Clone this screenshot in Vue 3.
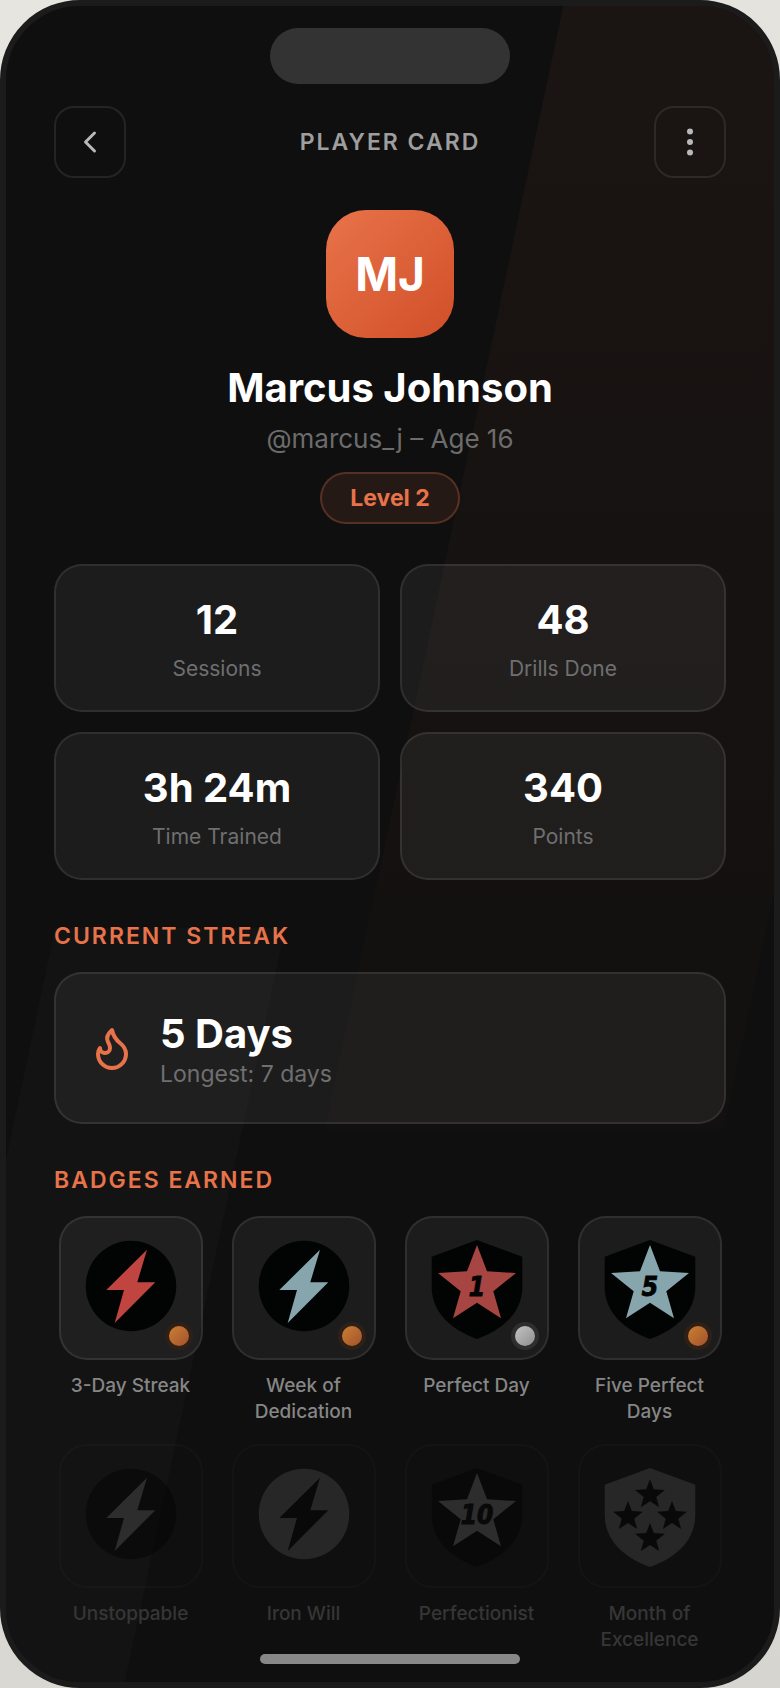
<template>
    <div class="phone">
        <div class="backdrop">
            <div class="stripe stripe--warm"></div>
            <div class="stripe stripe--light"></div>
        </div>

        <main class="screen">
            <div class="island"></div>

            <header class="topbar">
                <button type="button" class="topbar__btn" aria-label="Back">
                    <svg width="36" height="36" viewBox="0 0 24 24" fill="none" stroke="currentColor" stroke-width="2"
                        stroke-linecap="round" stroke-linejoin="round">
                        <path d="M15 18l-6-6 6-6" />
                    </svg>
                </button>
                <h1 class="topbar__title">PLAYER CARD</h1>
                <button type="button" class="topbar__btn" aria-label="More options">
                    <svg width="36" height="36" viewBox="0 0 24 24" fill="currentColor">
                        <circle cx="12" cy="5" r="2" />
                        <circle cx="12" cy="12" r="2" />
                        <circle cx="12" cy="19" r="2" />
                    </svg>
                </button>
            </header>

            <section class="profile">
                <div class="profile__avatar">{{ player.initials }}</div>
                <h2 class="profile__name">{{ player.name }}</h2>
                <p class="profile__handle">{{ player.handle }} – Age {{ player.age }}</p>
                <span class="profile__level">Level {{ player.level }}</span>
            </section>

            <section class="stats">
                <div v-for="stat in stats" :key="stat.label" class="card stat">
                    <span class="big-text">{{ stat.value }}</span>
                    <span class="stat__label">{{ stat.label }}</span>
                </div>
            </section>

            <h3 class="section-title">CURRENT STREAK</h3>
            <section class="card streak">
                <svg class="streak__icon" width="48" height="48" viewBox="0 0 24 24" fill="none" stroke="currentColor"
                    stroke-width="2" stroke-linecap="round" stroke-linejoin="round">
                    <path
                        d="M8.5 14.5A2.5 2.5 0 0 0 11 12c0-1.38-.5-2-1-3-1.072-2.143-.224-4.054 2-6 .5 2.5 2 4.9 4 6.5 2 1.6 3 3.5 3 5.5a7 7 0 1 1-14 0c0-1.153.433-2.294 1-3a2.5 2.5 0 0 0 2.5 2.5z" />
                </svg>
                <div class="streak__info">
                    <span class="big-text">5 Days</span>
                    <span class="streak__longest">Longest: 7 days</span>
                </div>
            </section>

            <h3 class="section-title">BADGES EARNED</h3>
            <ul class="badges">
                <li v-for="badge in badges" :key="badge.name" class="badge" :class="{ 'badge--locked': !badge.medal }">
                    <div class="badge__box">
                        <svg width="96" height="104" viewBox="0 0 96 104" :class="'tone-' + badge.tone">
                            <circle v-if="badge.shape === 'bolt'" class="base" cx="48" cy="50" r="45.3" />
                            <path v-else class="base" :d="shieldPath" />
                            <path v-if="badge.shape === 'bolt'" class="mark" :d="boltPath" />
                            <path v-if="badge.shape === 'star'" class="mark" :d="starPath" />
                            <template v-if="badge.shape === 'stars'">
                                <path v-for="(pos, i) in smallStars" :key="i" class="mark" :d="starPath"
                                    :transform="`translate(${pos[0]} ${pos[1]}) scale(.382) translate(-48 -9)`" />
                            </template>
                            <text v-if="badge.count" class="count" x="48" y="60" text-anchor="middle">{{ badge.count }}</text>
                        </svg>
                        <span v-if="badge.medal" class="medal" :class="'medal--' + badge.medal"></span>
                    </div>
                    <span class="badge__name">{{ badge.name }}</span>
                </li>
            </ul>
        </main>

        <div class="home-indicator"></div>
    </div>
</template>

<script setup>
import { ref } from 'vue'

const player = ref({
    initials: 'MJ',
    name: 'Marcus Johnson',
    handle: '@marcus_j',
    age: 16,
    level: 2
})

const stats = ref([
    { value: '12', label: 'Sessions' },
    { value: '48', label: 'Drills Done' },
    { value: '3h 24m', label: 'Time Trained' },
    { value: '340', label: 'Points' }
])

// badges without a medal are still locked
const badges = ref([
    { name: '3-Day Streak', shape: 'bolt', tone: 'red', medal: 'bronze' },
    { name: 'Week of Dedication', shape: 'bolt', tone: 'blue', medal: 'bronze' },
    { name: 'Perfect Day', shape: 'star', tone: 'brick', count: 1, medal: 'silver' },
    { name: 'Five Perfect Days', shape: 'star', tone: 'blue', count: 5, medal: 'bronze' },
    { name: 'Unstoppable', shape: 'bolt', tone: 'dim' },
    { name: 'Iron Will', shape: 'bolt', tone: 'dim-inverse' },
    { name: 'Perfectionist', shape: 'star', tone: 'dim', count: 10 },
    { name: 'Month of Excellence', shape: 'stars', tone: 'dim-inverse' }
])

const boltPath = 'M64 13.7L54.3 46.2H72.3L31.7 87L41 54H23.3Z'
const starPath = 'M48 9L58 35.3L87 37L64.3 55.3L72 82.3L48 66.7L24 82.3L31.7 55.3L9 37L38 35.3Z'
const shieldPath = 'M48 4L93.3 20.7V51C93.3 77 73 94 48 103C23 94 2.7 77 2.7 51V20.7Z'
const smallStars = [[48, 15.3], [26, 37], [70, 37], [48, 59]]
</script>

<style>
body {
    background: linear-gradient(160deg, #e6e5e0, #d6d5d0);
}
</style>

<style scoped>
.phone {
    position: relative;
    box-sizing: border-box;
    min-height: 100vh;
    border: 6px solid #1b1b1b;
    border-radius: 80px;
    background-color: #0f0f0f;
    overflow: hidden;
    font-family: Inter, "Open Sans", sans-serif;
    color: #fff;
}

.backdrop {
    position: absolute;
    inset: 0;
    overflow: hidden;
}

.stripe {
    position: absolute;
    transform: skewX(-12deg);
}

.stripe--warm {
    top: 0;
    right: -9%;
    width: 52%;
    height: 67%;
    background: linear-gradient(rgba(232, 115, 74, 0.055), rgba(232, 115, 74, 0.01));
}

.stripe--light {
    top: 55%;
    bottom: 0;
    left: -4%;
    width: 30%;
    background-color: rgba(255, 255, 255, 0.02);
}

.screen {
    position: relative;
    display: flex;
    flex-direction: column;
    padding: 22px 48px 24px;
}

.island {
    align-self: center;
    width: 240px;
    height: 56px;
    border-radius: 28px;
    background-color: #333;
}

.topbar {
    display: flex;
    align-items: center;
    justify-content: space-between;
    margin-top: 22px;
}

.topbar__btn {
    display: flex;
    align-items: center;
    justify-content: center;
    width: 72px;
    height: 72px;
    padding: 0;
    border: 2px solid rgba(255, 255, 255, 0.09);
    border-radius: 20px;
    background-color: transparent;
    color: #b8b8b8;
    cursor: pointer;
}

.topbar__title {
    margin: 0;
    font-size: 23px;
    line-height: 28px;
    font-weight: 600;
    letter-spacing: 2px;
    color: #9e9e9e;
}

.profile {
    display: flex;
    flex-direction: column;
    align-items: center;
    margin-top: 32px;
}

.profile__avatar {
    display: flex;
    align-items: center;
    justify-content: center;
    width: 128px;
    height: 128px;
    border-radius: 40px;
    background: linear-gradient(135deg, #e8734a, #d14f28);
    font-size: 46px;
    font-weight: 700;
}

.profile__name {
    margin: 26px 0 0;
    font-size: 40px;
    line-height: 48px;
    font-weight: 700;
}

.profile__handle {
    margin: 12px 0 0;
    font-size: 26px;
    line-height: 30px;
    color: #6c6c6c;
}

.profile__level {
    box-sizing: border-box;
    margin-top: 18px;
    padding: 0 28px;
    border: 2px solid rgba(232, 115, 74, 0.25);
    border-radius: 26px;
    background-color: rgba(232, 115, 74, 0.1);
    font-size: 23px;
    line-height: 48px;
    font-weight: 700;
    color: #e8734a;
}

.card {
    border: 2px solid rgba(255, 255, 255, 0.09);
    border-radius: 28px;
    background-color: rgba(255, 255, 255, 0.053);
}

.big-text {
    font-size: 40px;
    line-height: 48px;
    font-weight: 700;
}

.stats {
    display: grid;
    grid-template-columns: 1fr 1fr;
    gap: 20px;
    margin-top: 40px;
}

.stat {
    display: flex;
    flex-direction: column;
    align-items: center;
    gap: 10px;
    padding: 30px 16px 26px;
}

.stat__label {
    font-size: 21px;
    line-height: 30px;
    color: #6f6f6f;
}

.section-title {
    margin: 42px 0 22px;
    font-size: 23px;
    line-height: 28px;
    font-weight: 600;
    letter-spacing: 2px;
    color: #e8734a;
}

.streak {
    display: flex;
    align-items: center;
    gap: 24px;
    padding: 32px;
}

.streak__icon {
    flex: none;
    color: #e8734a;
}

.streak__info {
    display: flex;
    flex-direction: column;
    padding-top: 4px;
}

.streak__longest {
    font-size: 23px;
    line-height: 32px;
    color: #6f6f6f;
}

.badges {
    display: grid;
    grid-template-columns: repeat(4, 1fr);
    gap: 19px 20px;
    margin: 0;
    padding: 0;
    list-style: none;
}

.badge {
    display: flex;
    flex-direction: column;
    align-items: center;
    gap: 13px;
}

.badge__box {
    position: relative;
    box-sizing: border-box;
    display: flex;
    align-items: center;
    justify-content: center;
    width: 144px;
    height: 144px;
    border: 2px solid rgba(255, 255, 255, 0.09);
    border-radius: 28px;
    background-color: rgba(255, 255, 255, 0.053);
}

.badge__name {
    font-size: 19px;
    line-height: 26px;
    font-weight: 500;
    text-align: center;
    color: #868686;
}

.badge--locked .badge__box {
    border-color: rgba(255, 255, 255, 0.025);
    background-color: transparent;
}

.badge--locked .badge__name {
    color: #363636;
}

.base {
    fill: #020403;
}

.count {
    fill: #020403;
    stroke: #020403;
    stroke-width: 1;
    font-family: "DejaVu Sans Condensed", "DejaVu Sans", sans-serif;
    font-size: 26px;
    font-weight: 700;
    font-style: italic;
}

.tone-red .mark {
    fill: #c04540;
}

.tone-brick .mark {
    fill: #a64542;
}

.tone-blue .mark {
    fill: #87a5ad;
}

.tone-dim .base {
    fill: rgba(0, 0, 0, 0.4);
}

.tone-dim .mark {
    fill: #2d2d2d;
}

.tone-dim .count {
    fill: #090909;
    stroke: #090909;
}

.tone-dim-inverse .base {
    fill: #272727;
}

.tone-dim-inverse .mark {
    fill: #090909;
}

.medal {
    position: absolute;
    right: 8px;
    bottom: 8px;
    box-sizing: border-box;
    width: 28px;
    height: 28px;
    border: 4px solid transparent;
    border-radius: 50%;
}

.medal--bronze {
    background: linear-gradient(135deg, #cd7f32, #a0522d) padding-box, #2e2016 border-box;
}

.medal--silver {
    background: linear-gradient(135deg, #c4c4c4, #8e8e8e) padding-box, #2e2e2e border-box;
}

.home-indicator {
    position: absolute;
    bottom: 18px;
    left: 50%;
    width: 260px;
    height: 10px;
    margin-left: -130px;
    border-radius: 5px;
    background-color: #888;
}
</style>
